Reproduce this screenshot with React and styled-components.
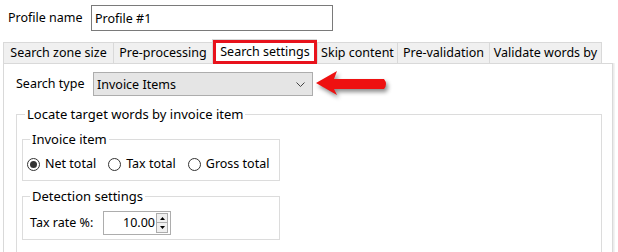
import React from "react";
import styled, { createGlobalStyle } from "styled-components";

const Global = createGlobalStyle`
  html, body { margin: 0; padding: 0; background: #fff; }
  body {
    font-family: "Noto Sans", "Open Sans", sans-serif;
    font-size: 12.5px;
    color: #000;
    overflow: hidden;
  }
  * { box-sizing: border-box; }
`;

const Window = styled.div`
  position: relative;
  width: 618px;
  height: 252px;
  overflow: hidden;
  background: #fff;
`;

const ProfileRow = styled.div`
  display: flex;
  align-items: center;
  height: 31px;
  padding: 5px 0 0 8px;
`;

const FieldLabel = styled.span`
  flex: none;
  width: ${(p) => p.$w}px;
  line-height: 16px;
  white-space: nowrap;
`;

const TextBox = styled.div`
  width: 242px;
  height: 26px;
  border: 1px solid #7a7a7a;
  padding-left: 3px;
  display: flex;
  align-items: center;
  background: #fff;
`;

const TabStrip = styled.div`
  display: flex;
  align-items: flex-end;
  height: 24px;
  margin: 8px 0 0 3px;
`;

const Tab = styled.div`
  position: relative;
  flex: none;
  width: ${(p) => p.$w}px;
  height: ${(p) => (p.$active ? 25 : 21)}px;
  margin-bottom: ${(p) => (p.$active ? -1 : 0)}px;
  z-index: ${(p) => (p.$active ? 2 : 1)};
  border: 1px solid #d9d9d9;
  border-bottom: none;
  border-right: ${(p) => (p.$last ? "1px solid #d9d9d9" : "none")};
  background: ${(p) => (p.$active ? "#fff" : "#f0f0f0")};
  box-shadow: ${(p) => (p.$active ? "inset 0 0 0 3px #e8121c" : "none")};
  text-align: center;
  line-height: 20px;
  padding-top: ${(p) => (p.$active ? 2 : 0)}px;
  white-space: nowrap;
`;

const Panel = styled.div`
  width: 610px;
  height: 200px;
  margin-left: 3px;
  border: 1px solid #d9d9d9;
  box-shadow: 1px 0 0 #ececec, 2px 0 0 #f3f3f3;
  padding: 8px 0 0 12px;
`;

const SearchRow = styled.div`
  display: flex;
  align-items: center;
  height: 24px;
`;

const Combo = styled.div`
  width: 220px;
  height: 24px;
  border: 1px solid #adadad;
  background: #e5e5e5;
  display: flex;
  align-items: center;
  justify-content: space-between;
  padding: 0 7px 0 3px;
`;

const Group = styled.fieldset`
  margin: ${(p) => p.$mt}px 0 0 0;
  width: ${(p) => p.$w}px;
  height: ${(p) => (p.$h ? `${p.$h}px` : "auto")};
  border: 1px solid #dcdcdc;
  padding: ${(p) => p.$pad};
  min-width: 0;
`;

const Legend = styled.legend`
  margin-left: 3px;
  padding: 0 2px;
  line-height: 17px;
  font-size: 13px;
  white-space: nowrap;
`;

const RadioRow = styled.div`
  display: flex;
  align-items: center;
  gap: 12px;
  height: 16px;
`;

const RadioLabel = styled.label`
  display: flex;
  align-items: center;
  gap: 5px;
  line-height: 16px;
  white-space: nowrap;
`;

const RadioCircle = styled.span`
  position: relative;
  flex: none;
  width: 13px;
  height: 13px;
  border-radius: 50%;
  border: 1px solid #333;
  background: #fff;
  &::after {
    content: "";
    display: ${(p) => (p.$checked ? "block" : "none")};
    position: absolute;
    left: 2px;
    top: 2px;
    width: 7px;
    height: 7px;
    border-radius: 50%;
    background: #333;
  }
`;

const TaxRow = styled.div`
  display: flex;
  align-items: center;
  padding-left: 3px;
`;

const Spin = styled.div`
  display: flex;
  align-items: center;
  width: 68px;
  height: 24px;
  border: 1px solid #adadad;
  background: #fff;
`;

const SpinValue = styled.span`
  flex: 1;
  text-align: right;
  padding-right: 1px;
  line-height: 16px;
`;

const SpinButtons = styled.div`
  display: flex;
  flex-direction: column;
  width: 12px;
  margin-right: 2px;
`;

const SpinButton = styled.div`
  height: 10px;
  border: 1px solid #adadad;
  border-top: ${(p) => (p.$down ? "none" : "1px solid #adadad")};
  background: #f0f0f0;
  display: flex;
  align-items: center;
  justify-content: center;
`;

const Arrow = styled.svg`
  position: absolute;
  left: 313px;
  top: 68px;
  filter: drop-shadow(2px 3px 2px rgba(0, 0, 0, 0.45));
`;

const tabs = [
  { label: "Search zone size", w: 110 },
  { label: "Pre-processing", w: 99 },
  { label: "Search settings", w: 105, active: true },
  { label: "Skip content", w: 80 },
  { label: "Pre-validation", w: 92 },
  { label: "Validate words by", w: 113 },
];

const Triangle = ({ up }) => (
  <svg width="5" height="3" viewBox="0 0 5 3">
    <path d={up ? "M0 3 L2.5 0 L5 3 Z" : "M0 0 L2.5 3 L5 0 Z"} fill="#000" />
  </svg>
);

export default function App() {
  return (
    <>
      <Global />
      <Window>
        <ProfileRow>
          <FieldLabel $w={83}>Profile name</FieldLabel>
          <TextBox>Profile #1</TextBox>
        </ProfileRow>

        <TabStrip>
          {tabs.map((t, i) => (
            <Tab key={t.label} $w={t.w} $active={t.active} $last={i === tabs.length - 1}>
              {t.label}
            </Tab>
          ))}
        </TabStrip>

        <Panel>
          <SearchRow>
            <FieldLabel $w={77}>Search type</FieldLabel>
            <Combo>
              <span>Invoice Items</span>
              <svg width="9" height="5" viewBox="0 0 9 5">
                <path d="M0.5 0.5 L4.5 4.5 L8.5 0.5" fill="none" stroke="#444" strokeWidth="1" />
              </svg>
            </Combo>
          </SearchRow>

          <Group $mt={10} $w={586} $h={160} $pad="8px 0 0 5px">
            <Legend>Locate target words by invoice item</Legend>

            <Group $mt={0} $w={258} $pad="8px 0 8px 4px">
              <Legend>Invoice item</Legend>
              <RadioRow>
                <RadioLabel>
                  <RadioCircle $checked />
                  Net total
                </RadioLabel>
                <RadioLabel>
                  <RadioCircle />
                  Tax total
                </RadioLabel>
                <RadioLabel>
                  <RadioCircle />
                  Gross total
                </RadioLabel>
              </RadioRow>
            </Group>

            <Group $mt={7} $w={258} $pad="6px 0 4px 4px">
              <Legend>Detection settings</Legend>
              <TaxRow>
                <FieldLabel $w={73}>Tax rate %:</FieldLabel>
                <Spin>
                  <SpinValue>10.00</SpinValue>
                  <SpinButtons>
                    <SpinButton>
                      <Triangle up />
                    </SpinButton>
                    <SpinButton $down>
                      <Triangle />
                    </SpinButton>
                  </SpinButtons>
                </Spin>
              </TaxRow>
            </Group>
          </Group>
        </Panel>

        <Arrow width="84" height="34" viewBox="0 0 84 34">
          <path
            d="M3 15 L24 3 L21 11 L71 11 Q75 16 71 21 L21 21 L24 27 Z"
            fill="#ee1111"
          />
        </Arrow>
      </Window>
    </>
  );
}
